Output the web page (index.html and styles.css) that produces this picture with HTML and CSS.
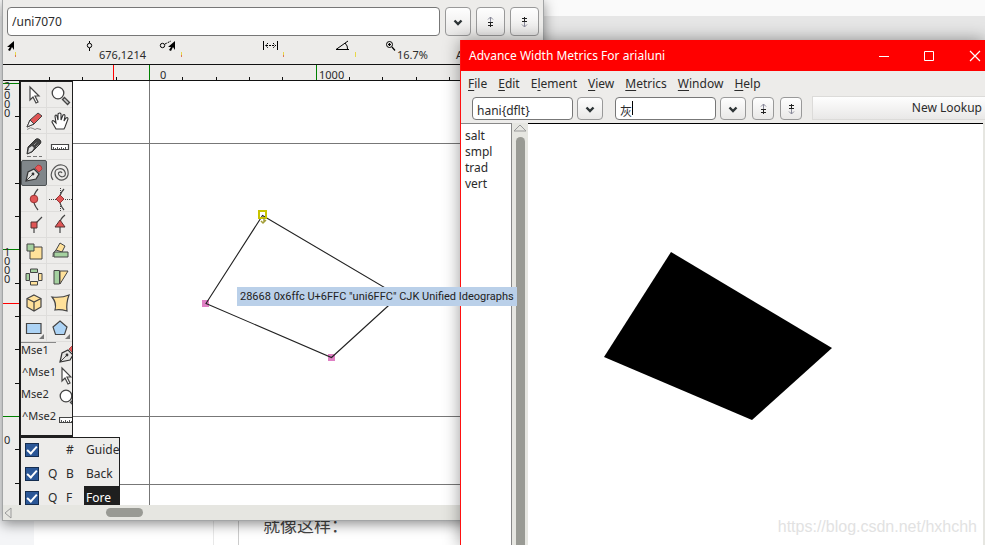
FILE: index.html
```html
<!DOCTYPE html>
<html lang="en">
<head>
<meta charset="utf-8">
<title>Advance Width Metrics For arialuni</title>
<link rel="stylesheet" href="styles.css">
</head>
<body>
<svg width="0" height="0" class="defs" aria-hidden="true">
  <defs>
    <g id="i-pointer"><path d="M-4-8V5L-1 2 2 8 4 7 1 1H5Z" fill="#fff" stroke="#444" stroke-width="1.2"/></g>
    <g id="i-zoom"><path d="M3 3l6 6" stroke="#444" stroke-width="4"/><path d="M4 4l4 4" stroke="#ccc" stroke-width="1.6"/><circle cx="-2" cy="-2" r="5.8" fill="#fff" stroke="#444" stroke-width="1.3"/></g>
    <g id="i-pen"><path d="M-8 8L-6-1 0-4 5 1 2 6Z" fill="#e4e4e2" stroke="#333" stroke-width="1.2"/><path d="M-7 7L-2 2" stroke="#444"/><circle cx="-1" cy="1" r="1.400" fill="#333"/><path d="M1-5L4-8Q8-8 8-4L5-1Z" fill="#e85858" stroke="#a33" stroke-width=".8"/></g>
    <g id="i-ruler"><path d="M-8.500-2.500H8.500V2.500H-8.500Z" fill="#fff" stroke="#444" stroke-width="1.2"/><path d="M-6.500 2V0M-4.500 2V1M-2.500 2V0M-.5 2V1M1.500 2V0M3.500 2V1M5.500 2V0" stroke="#444" stroke-width=".9"/></g>
    <g id="i-down"><path d="M-3.500-1.500L0 2 3.500-1.500" fill="none" stroke="#2d3436" stroke-width="2.400"/></g>
    <g id="i-next"><path d="M.5-5V0M-2-2.500L.5-5 3-2.500" stroke="#889" fill="none"/><path d="M-2 .5H3M.5 0V5M-1 3L.5 4.500 2 3M-2 3.500H3" stroke="#222" fill="none"/></g>
    <g id="i-prev"><path d="M.5 0V5M-2 2.500L.5 5 3 2.500" stroke="#889" fill="none"/><path d="M-2-.5H3M.5 0V-5M-1-3L.5-4.500 2-3M-2-3.500H3" stroke="#222" fill="none"/></g>
  </defs>
</svg>

<main class="desktop">
  <article class="page">
    <div class="page-side"></div>
    <div class="page-main"></div>
    <div class="page-gap"></div>
    <div class="page-text"><p>就像这样：</p></div>
  </article>

  <section class="window editor" aria-label="Glyph window">
    <form class="search">
      <input type="text" value="/uni7070" aria-label="Glyph name">
      <button type="button" class="drop" aria-label="History"><svg viewBox="-8 -8 16 16"><use href="#i-down"/></svg></button>
      <button type="button" aria-label="Next"><svg viewBox="-8 -8 16 16"><use href="#i-next"/></svg></button>
      <button type="button" aria-label="Previous"><svg viewBox="-8 -8 16 16"><use href="#i-prev"/></svg></button>
    </form>
    <div class="info">
      <svg class="info-icons" viewBox="0 0 540 26" aria-hidden="true">
        <path d="M11 3v9l-2-3-2 4-2-1 2-3H4z" fill="#000"/>
        <path d="M86.500 3v2M86.500 10v3" stroke="#000"/><circle cx="86.500" cy="7.500" r="2.200" fill="none" stroke="#000"/>
        <circle cx="159.500" cy="7.500" r="2.200" fill="none" stroke="#000"/><path d="M162 6l6-3" stroke="#000" stroke-dasharray="2 1"/><path d="M172 3v9l-2-3-2 4-2-1 2-3h-3z"/>
        <path d="M260.500 3v9M274.500 3v9" stroke="#000"/><path d="M263 7.500h10M265 5l-2.500 2.500L265 10M270 5l2.500 2.500L270 10" fill="none" stroke="#000" stroke-dasharray="2 1"/>
        <path d="M345 3l-12 8.500h13M342 5q3 3 2.500 6" fill="none" stroke="#000"/>
        <circle cx="386.500" cy="6.500" r="3" fill="none" stroke="#000"/><path d="M385 6.500h3M386.500 5v3M389 9l3 3.500" stroke="#000" stroke-width="1.200"/>
        <path d="M12.500 14v3M178.500 14v3M280.500 14v3M352.500 14v5" stroke="#e8d84a"/><path d="M12.500 17v2M178.500 17v2M280.500 17v2" stroke="#d75"/>
      </svg>
      <span class="coords">676,1214</span><span class="scale">16.7%</span><span class="layer">Active</span>
    </div>
    <div class="ruler-top">
      <svg viewBox="0 0 540 16" aria-hidden="true"><path d="M46.500 12v3M79.500 12v3M113.500 12v3M179.500 12v3M213.500 12v3M246.500 12v3M279.500 12v3M346.500 12v3M379.500 12v3M413.500 12v3M446.500 12v3" stroke="#111"/><path d="M146.500 0v16M313.500 0v16" stroke="#008000"/><path d="M110.500 0v16" stroke="#f00"/></svg>
      <span class="zero">0</span><span class="thousand">1000</span>
    </div>
    <div class="work">
      <div class="ruler-left">
        <svg viewBox="0 0 16 424" aria-hidden="true"><path d="M12 35.500h4M12 68.500h4M12 102.500h4M12 135.500h4M12 202.500h4M12 235.500h4M12 268.500h4M12 302.500h4M12 368.500h4M12 402.500h4" stroke="#111"/><path d="M0 2.500h16M0 168.500h16M0 335.500h16" stroke="#008000"/><path d="M0 222.500h16" stroke="#f00"/></svg>
        <span class="v2000">2<br>0<br>0<br>0</span><span class="v1000">1<br>0<br>0<br>0</span><span class="v0">0</span>
      </div>
      <div class="canvas">
        <svg class="drawing" viewBox="0 0 524 424" aria-label="Outline">
          <path d="M130.500 0V424M0 62.500H524M0 335.500H524M0 403.500H524" stroke="#777"/>
          <path d="M183 219h7v7h-7zM309 273h7v7h-7z" fill="#df80c4"/>
          <path d="M243.500 134.500L187 222.500 312.500 276.500 380 215Z" fill="none" stroke="#222" stroke-width="1.100"/>
          <path d="M240 130h7v7h-7z" fill="none" stroke="#c8c400" stroke-width="2"/><path d="M245 137v4M242 140l2 2 3-3" fill="none" stroke="#a29d38" stroke-width="1.500"/>
        </svg>
        <div class="tools">
          <div class="tool-grid">
            <button type="button" aria-label="Pointer"><svg viewBox="-13 -13 26 26"><use href="#i-pointer"/></svg></button>
            <button type="button" aria-label="Magnify"><svg viewBox="-13 -13 26 26"><use href="#i-zoom"/></svg></button>
            <button type="button" aria-label="Freehand"><svg viewBox="-13 -13 26 26"><path d="M-7 6L-4-1 4-8 8-5 0 3Z" fill="#e05555" stroke="#444"/><path d="M-7 6L-4-1 0 3Z" fill="#eee" stroke="#444"/><path d="M-7 8.500q4-3 6-1t4 0l4 1" fill="none" stroke="#888"/></svg></button>
            <button type="button" aria-label="Hand"><svg viewBox="-13 -13 26 26"><path d="M-4 8L-8 1Q-8-1-6 0L-4 2-5-5Q-4-7-3-5L-2-1-2-7Q0-9 1-7L1-1 3-6Q5-7 5-5L4 0 6-3Q8-4 8-2L5 6 4 8Z" fill="#fff" stroke="#333" stroke-width="1.100"/></svg></button>
            <button type="button" aria-label="Knife"><svg viewBox="-13 -13 26 26"><path d="M-7 7L-6 0 2-8Q4-9 6-7T6-3L-2 5Z" fill="#444" stroke="#333"/><path d="M-6 6L-5 1-2-1 0 1-2 4Z" fill="#ddd"/><path d="M0-2l3-3M2 0l3-3" stroke="#bbb" stroke-dasharray="1 1"/><path d="M-7 9.500H8" stroke="#777" stroke-dasharray="4 2"/></svg></button>
            <button type="button" aria-label="Ruler"><svg viewBox="-13 -13 26 26"><use href="#i-ruler"/></svg></button>
            <button type="button" class="active" aria-label="Pen"><svg viewBox="-13 -13 26 26"><use href="#i-pen"/></svg></button>
            <button type="button" aria-label="Spiro"><svg viewBox="-13 -13 26 26"><path d="M-7 7C-12 0-5-9 2-8S10 3 5 6-5 5-5 0 3-6 5-1 1 5-1 2 1-2 2 0" fill="none" stroke="#555" stroke-width="1.200"/></svg></button>
            <button type="button" aria-label="Curve point"><svg viewBox="-13 -13 26 26"><path d="M4-10Q-5 0 4 11" fill="none" stroke="#444" stroke-width="1.200"/><circle r="3.800" fill="#e05555" stroke="#933"/></svg></button>
            <button type="button" aria-label="HV curve point"><svg viewBox="-13 -13 26 26"><path d="M4-10Q-5 0 4 11" fill="none" stroke="#444" stroke-width="1.200"/><path d="M-11 .5H12M.5-11V12" stroke="#444" stroke-dasharray="1 1"/><path d="M0-4L4 0 0 4-4 0Z" fill="#e05555" stroke="#933"/></svg></button>
            <button type="button" aria-label="Corner point"><svg viewBox="-13 -13 26 26"><path d="M0 8V0L8-8" fill="none" stroke="#444" stroke-width="1.200"/><path d="M-3-3H3V3H-3Z" fill="#e05555" stroke="#533"/></svg></button>
            <button type="button" aria-label="Tangent point"><svg viewBox="-13 -13 26 26"><path d="M0 8V-2Q0-6 5-10" fill="none" stroke="#444" stroke-width="1.200"/><path d="M0-5L5 2H-5Z" fill="#e05555" stroke="#533"/></svg></button>
            <button type="button" aria-label="Scale"><svg viewBox="-13 -13 26 26"><path d="M-4-4H8V8H-4Z" fill="#ffe19a" stroke="#444"/><path d="M-7-7H0V0H-7Z" fill="#a5d1a0" stroke="#444"/></svg></button>
            <button type="button" aria-label="Rotate"><svg viewBox="-13 -13 26 26"><path d="M-4-1L0-8 5-5 2 1Z" fill="#ffe19a" stroke="#444"/><path d="M-6 1H8V6H-6Z" fill="#a5d1a0" stroke="#444"/><path d="M-4-1Q-8 2-7 6" fill="none" stroke="#444"/></svg></button>
            <button type="button" aria-label="Flip"><svg viewBox="-13 -13 26 26"><circle r="6" fill="none" stroke="#555" stroke-dasharray="2 2"/><path d="M-3.500-8H3.500V-4.500H-3.500ZM-8-3.500H-4.500V3.500H-8Z" fill="#a5d1a0" stroke="#444"/><path d="M-3.500 4.500H3.500V8H-3.500ZM4.500-3.500H8V3.500H4.500Z" fill="#ffe19a" stroke="#444"/></svg></button>
            <button type="button" aria-label="Skew"><svg viewBox="-13 -13 26 26"><path d="M0-6H8L0 7Z" fill="#ffe19a" stroke="#444"/><path d="M-6-6.500H-.5V7H-6Z" fill="#a5d1a0" stroke="#444"/></svg></button>
            <button type="button" aria-label="3D rotate"><svg viewBox="-13 -13 26 26"><path d="M0-8L7-4.500V4L0 8-7 4V-4.500Z" fill="#ffe19a" stroke="#444" stroke-width="1.200"/><path d="M-7-4.500L0-1 7-4.500M0-1V8" fill="none" stroke="#444" stroke-width="1.200"/></svg></button>
            <button type="button" aria-label="Perspective"><svg viewBox="-13 -13 26 26"><path d="M-8-6Q2-5 9-8 6 0 7 8 0 6-5 7-3 0-8-6Z" fill="#ffe19a" stroke="#444" stroke-width="1.200"/></svg></button>
            <button type="button" aria-label="Rectangle"><svg viewBox="-13 -13 26 26"><path d="M-7.500-5.500H7V4.500H-7.500Z" fill="#acd3f5" stroke="#444" stroke-width="1.200"/><path d="M10 5V10H5Z" fill="#777"/></svg></button>
            <button type="button" aria-label="Polygon"><svg viewBox="-13 -13 26 26"><path d="M0-8L7-2 4.500 5.500H-4.500L-7-2Z" fill="#acd3f5" stroke="#444" stroke-width="1.200"/><path d="M10 5V10H5Z" fill="#777"/></svg></button>
          </div>
          <ul class="mouse">
            <li><span>Mse1</span><svg viewBox="-9 -11 13 22"><use href="#i-pen"/></svg></li>
            <li><span class="ctrl">^Mse1</span><svg viewBox="-7 -11 13 22"><use href="#i-pointer"/></svg></li>
            <li><span>Mse2</span><svg viewBox="-9 -11 13 22"><use href="#i-zoom"/></svg></li>
            <li><span class="ctrl">^Mse2</span><svg viewBox="-9 -11 13 22"><use href="#i-ruler"/></svg></li>
          </ul>
        </div>
        <div class="layers">
          <div class="layer-row"><input type="checkbox" checked aria-label="Guide visible"><span></span><span>#</span><span class="name">Guide</span></div>
          <div class="layer-row"><input type="checkbox" checked aria-label="Back visible"><span>Q</span><span>B</span><span class="name">Back</span></div>
          <div class="layer-row"><input type="checkbox" checked aria-label="Fore visible"><span>Q</span><span>F</span><span class="name selected">Fore</span></div>
        </div>
      </div>
    </div>
    <div class="hscroll"><svg viewBox="0 0 10 14" aria-hidden="true"><path d="M8 2L2 7l6 5z" fill="#e6e6e1" stroke="#999"/></svg><div class="thumb"></div></div>
  </section>

  <section class="window metrics" aria-label="Metrics window">
    <header class="title"><h1>Advance Width Metrics For arialuni</h1>
      <svg viewBox="0 0 102 12" aria-label="Window controls"><path d="M0 6.500h10" stroke="#fff"/><path d="M45.500 1.500h9v9h-9z" fill="none" stroke="#fff"/><path d="M91 1l10 10M101 1L91 11" stroke="#fff" stroke-width="1.200"/></svg>
    </header>
    <nav class="menu"><a href="#"><u>F</u>ile</a><a href="#"><u>E</u>dit</a><a href="#">E<u>l</u>ement</a><a href="#"><u>V</u>iew</a><a href="#"><u>M</u>etrics</a><a href="#"><u>W</u>indow</a><a href="#"><u>H</u>elp</a></nav>
    <form class="toolbar">
      <input type="text" value="hani{dflt}" aria-label="Script">
      <button type="button" class="drop" aria-label="Scripts"><svg viewBox="-8 -8 16 16"><use href="#i-down"/></svg></button>
      <span class="field"><input type="text" value="灰" aria-label="Text"><i></i></span>
      <button type="button" class="drop" aria-label="Texts"><svg viewBox="-8 -8 16 16"><use href="#i-down"/></svg></button>
      <button type="button" class="step" aria-label="Next"><svg viewBox="-8 -8 16 16"><use href="#i-next"/></svg></button>
      <button type="button" class="step" aria-label="Previous"><svg viewBox="-8 -8 16 16"><use href="#i-prev"/></svg></button>
      <button type="button" class="lookup">New Lookup</button>
    </form>
    <div class="metrics-body">
      <ul class="features"><li>salt</li><li>smpl</li><li>trad</li><li>vert</li></ul>
      <div class="vscroll"><svg viewBox="0 0 16 12" aria-hidden="true"><path d="M8 2l6 6H2z" fill="#e6e6e1" stroke="#999"/></svg><div class="thumb"></div></div>
      <div class="preview"><svg viewBox="0 0 456 421" aria-label="Glyph preview"><path d="M143 128L304 224 224 296 76 233Z"/></svg></div>
      <div class="edge"></div>
    </div>
  </section>

  <div class="tooltip" role="tooltip">28668 0x6ffc U+6FFC "uni6FFC" CJK Unified Ideographs</div>
  <div class="watermark">https://blog.csdn.net/hxhchh</div>
</main>
</body>
</html>
```

FILE: styles.css
```css
* { box-sizing: border-box; }
body { margin: 0; background: #fff; color: #2b2b2b; font: 12px/16px "Noto Sans", "Noto Sans CJK SC", sans-serif; }
.defs { position: absolute; }
svg { display: block; flex: none; }
ul { margin: 0; padding: 0; list-style: none; }
button, input { margin: 0; font: inherit; color: inherit; }
.desktop { position: relative; height: 100vh; overflow: hidden; }

/* document behind the windows */
.page { height: 100%; display: grid; grid-template-columns: 34px 180px 25px 1fr; border-top: 16px solid #fafafa; background: #fff; }
.page-side { background: #f4f5f7; }
.page-main { border-right: 1px solid #e8e8e8; }
.page-gap { border-right: 1px solid #ccc; }
.page-text { display: flex; align-items: flex-end; padding: 0 24px 8px; background: linear-gradient(#e6e6e6 0 24px, #fff 24px); }
.page-text p { margin: 0; font: 17px/24px "Noto Sans CJK SC", sans-serif; color: #444; }

.window { position: absolute; display: flex; flex-direction: column; background: #edecea; }
.editor { left: 2px; top: 0; bottom: 24px; width: 55%; border: solid #a3a5a6; border-width: 0 1px 1px; box-shadow: 0 3px 12px rgba(0, 0, 0, .45); }
.metrics { left: 460px; top: 40px; right: 0; bottom: 0; border-left: 1px solid #f11; box-shadow: 0 0 16px rgba(0, 0, 0, .4); }

.window input[type=text] { min-width: 0; background: #fff; border: 1px solid #777; border-radius: 4px; padding: 0 4px; outline: 0; }
.window form button { display: flex; align-items: center; justify-content: center; padding: 0; border: 1px solid #999; border-radius: 4px; background: linear-gradient(#fefefe, #e9e8e7); }
form svg { width: 16px; height: 16px; }

.search { display: flex; gap: 5px; padding: 7px 4px 2px; }
.search input { flex: 1; height: 29px; }
.search button { width: 29px; }
.search .drop { width: 26px; }
.info { position: relative; height: 26px; font: 11px/14px "Noto Sans", sans-serif; }
.info svg { width: 540px; height: 26px; }
.info span { position: absolute; top: 10px; }
.info .coords { left: 96px; }
.info .scale { left: 394px; }
.info .layer { left: 453px; }
.ruler-top { position: relative; height: 17px; border: solid #111; border-width: 1px 0; overflow: hidden; font-size: 11px; }
.ruler-top svg { width: 540px; height: 16px; }
.ruler-top span { position: absolute; top: 2px; }
.ruler-top .zero { left: 157px; }
.ruler-top .thousand { left: 316px; }
.work { flex: 1; min-height: 0; display: flex; }
.ruler-left { position: relative; width: 16px; font: 11px/9px "Noto Sans", sans-serif; }
.ruler-left svg { width: 16px; height: 424px; }
.ruler-left span { position: absolute; left: 1px; }
.v2000 { top: 0; }
.v1000 { top: 166px; }
.v0 { top: 354px; }
.canvas { position: relative; flex: 1; overflow: hidden; border-left: 1px solid #111; background: #fff; }
.drawing { width: 524px; height: 424px; margin-left: -1px; }

/* palettes floating over the canvas */
.tools { position: absolute; left: -1px; top: -1px; width: 54px; height: 357px; border: solid #1f1f1f; border-width: 2px 1px 2px 2px; background: #edecea; overflow: hidden; }
.tool-grid { display: grid; grid-template-columns: repeat(2, 26px); }
.tool-grid button { width: 26px; height: 26px; padding: 0; border: solid #dedddb; border-width: 0 1px 1px 0; background: none; }
.tool-grid button.active { background: #80868a; border: 1px solid #4d5254; border-radius: 2px; }
.tool-grid svg { width: 26px; height: 26px; }
.tool-grid .active svg { margin: -1px; }
.mouse { font-size: 11px; line-height: 14px; }
.mouse::before { content: ""; display: block; width: 35px; height: 1px; background: #888; }
.mouse li { display: flex; justify-content: space-between; height: 22px; }
.mouse svg { width: 13px; height: 22px; }
.mouse .ctrl { padding-left: 1px; }
.layers { position: absolute; left: -1px; top: 356px; width: 101px; border: solid #1f1f1f; border-width: 1px 1px 0 2px; background: #edecea; }
.layer-row { display: grid; grid-template-columns: 23px 18px 18px 1fr; align-items: center; height: 24px; padding-left: 4px; }
.layer-row .name { height: 24px; line-height: 24px; padding-left: 2px; }
.layer-row .selected { background: #1f1f1f; color: #fff; }
.layer-row input { appearance: none; width: 14px; height: 14px; border: 1px solid #152d4f; background: #2b5797; display: grid; place-items: center; }
.layer-row input::after { content: ""; width: 4px; height: 8px; margin-top: -2px; border: solid #fff; border-width: 0 2px 2px 0; transform: rotate(42deg); }

.hscroll { display: flex; align-items: center; height: 15px; background: #e6e6e1; }
.hscroll svg { width: 10px; height: 14px; }
.hscroll .thumb { width: 37px; height: 9px; margin-left: 93px; border-radius: 5px; background: #999a94; }

.title { display: flex; align-items: center; justify-content: space-between; height: 31px; padding-left: 8px; background: #f00; color: #fff; }
.title h1 { margin: 0; font-size: 12px; font-weight: 400; }
.title svg { width: 102px; height: 12px; margin-right: 4px; }
.menu { display: flex; gap: 11px; padding: 5px 7px 4px; }
.menu a { color: inherit; text-decoration: none; }
.menu u { text-underline-offset: 2px; }
.toolbar { display: flex; gap: 4px; align-items: flex-end; height: 27px; padding: 0 0 3px 11px; }
.toolbar input { width: 101px; height: 23px; }
.window .toolbar input { padding-top: 4px; }
.toolbar .drop { width: 26px; height: 23px; margin-right: 8px; }
.toolbar .drop:has(+ .step) { margin-right: 2px; }
.toolbar .step { width: 22px; height: 23px; margin-right: 2px; }
.field { position: relative; display: flex; }
.field i { position: absolute; left: 17px; top: 4px; width: 1px; height: 14px; background: #000; }
.window .toolbar .lookup { flex: 1; height: 24px; justify-content: flex-end; margin-left: 4px; padding-right: 3px; border: 1px solid #dcdbd9; border-right: 0; border-radius: 0; }
.metrics-body { flex: 1; min-height: 0; display: flex; background: #fff; }
.features { width: 51px; padding: 4px; border-top: 1px solid #888; border-right: 1px solid #888; }
.vscroll { display: flex; flex-direction: column; align-items: center; width: 16px; background: #e6e6e1; }
.vscroll svg { width: 16px; height: 12px; }
.vscroll .thumb { flex: 1; width: 9px; margin-top: 2px; border-radius: 5px 5px 0 0; background: #999a94; }
.preview { flex: 1; min-width: 0; overflow: hidden; border-top: 1px solid #000; }
.preview svg { width: 456px; height: 421px; }
.edge { width: 2px; background: #e6e6e1; }

.tooltip { position: absolute; left: 237px; top: 287px; padding: 2px 3px; height: 19px; background: #bad0e9; color: #222; font: 11px/16px Roboto, sans-serif; white-space: nowrap; }
.watermark { position: absolute; right: 8px; bottom: 8px; color: #e2e2e2; font: 16px/20px "Liberation Sans", sans-serif; }
```
